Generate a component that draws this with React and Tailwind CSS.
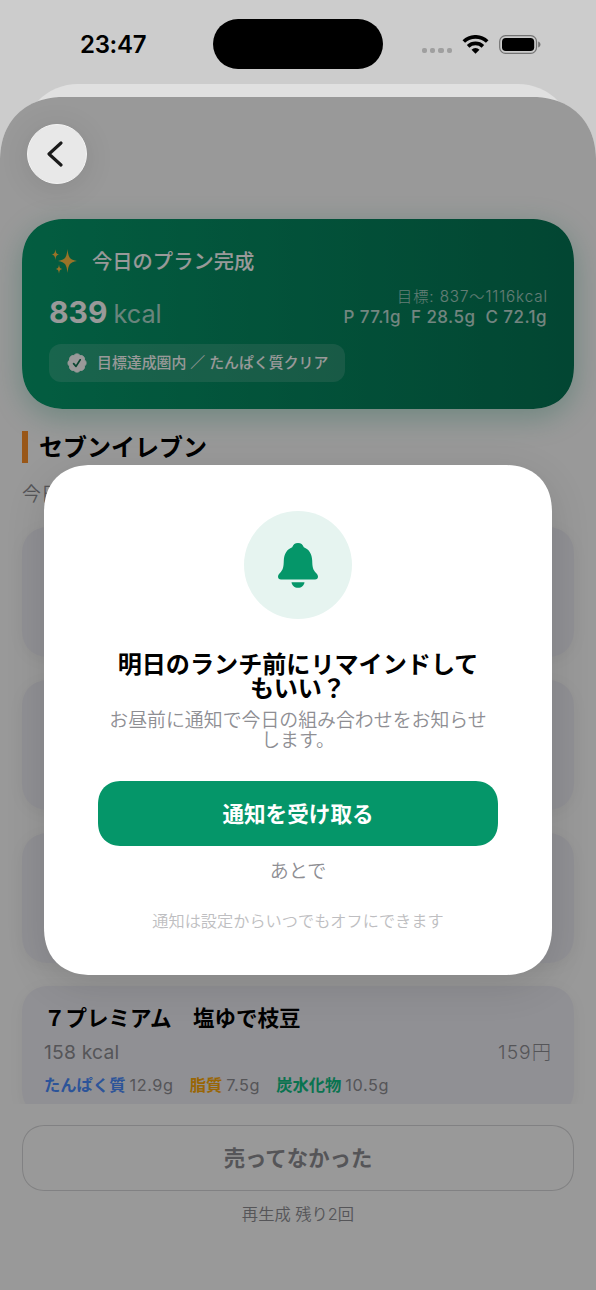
import React from 'react'
import { BadgeCheck } from 'lucide-react'

const StatusBar = () => (
  <div className="flex h-[84px] items-start text-black">
    <div className="mt-[31px] w-[213px] pl-[80px] text-[24px] font-semibold leading-[28px] tracking-[-0.3px]">23:47</div>
    <div className="mt-[19px] h-[50px] w-[170px] rounded-full bg-black" />
    <div className="mt-[34px] ml-[39px] flex h-5 items-center">
      <div className="mt-[13px] flex gap-[3px]">
        <span className="h-[5px] w-[5.200px] rounded-[2px] bg-[#9f9f9f]" />
        <span className="h-[5px] w-[5.200px] rounded-[2px] bg-[#9f9f9f]" />
        <span className="h-[5px] w-[5.200px] rounded-[2px] bg-[#9f9f9f]" />
        <span className="h-[5px] w-[5.200px] rounded-[2px] bg-[#9f9f9f]" />
      </div>
      <svg className="ml-[10px] h-[19px] w-[27px]" viewBox="0 0 27 19" fill="none" stroke="#000" strokeWidth="3.700">
        <path d="M1.8 6.500a17 17 0 0 1 23.4 0" />
        <path d="M6.1 11.300a10.8 10.8 0 0 1 14.8 0" />
        <path d="M13.5 18.8l-4-4.1a5.8 5.8 0 0 1 8 0z" fill="#000" stroke="none" />
      </svg>
      <svg className="ml-[10px] h-[19px] w-[42px]" viewBox="0 0 42 19">
        <rect x="0.7" y="0.7" width="36.8" height="17.6" rx="5.8" fill="none" stroke="#737373" strokeWidth="1.2" />
        <rect x="3" y="3" width="32.2" height="13" rx="3.8" />
        <path d="M39.2 6.6c3 .8 3 5 0 5.8z" fill="#737373" />
      </svg>
    </div>
  </div>
)

const Sparkles = () => (
  <svg className="h-[27px] w-[27px]" viewBox="0 0 27 27" fill="#ffc043">
    <path d="M16.5 1c.9 8.300 2 10.700 9.500 12-7.500 1.300-8.600 3.700-9.500 12-.9-8.300-2-10.700-9.500-12 7.500-1.300 8.600-3.700 9.500-12z" />
    <path d="M4.400 1.200c.5 3.700 1 4.800 4.100 5.400-3.100.6-3.600 1.700-4.100 5.400-.5-3.700-1-4.800-4.100-5.400 3.100-.6 3.600-1.700 4.100-5.400z" />
    <path d="M8 16.500c.4 3 .9 4.100 3.300 4.600-2.400.5-2.900 1.600-3.300 4.600-.4-3-.9-4.100-3.300-4.600 2.400-.5 2.900-1.600 3.300-4.600z" />
  </svg>
)

// White seal with the tick in the card's green
const Seal = () => (
  <span className="relative block size-[22px]">
    <BadgeCheck className="size-[22px] fill-white text-white" strokeWidth={1} />
    <svg className="absolute inset-0 size-[22px]" viewBox="0 0 24 24" fill="none" stroke="#137553" strokeWidth="1.900" strokeLinecap="round" strokeLinejoin="round">
      <path d="M8.300 12.700l2.600 3 4.600-7.200" />
    </svg>
  </span>
)

const PlanCard = () => (
  <div className="mx-[22px] h-[190px] rounded-[44px] bg-linear-to-r from-[#059b6c] to-[#047554] px-[27px] pt-[26px] text-white shadow-[0_8px_30px_rgba(5,150,105,0.3)] [corner-shape:superellipse(1.2)]">
    <div className="flex h-8 items-center">
      <div className="ml-[2px]"><Sparkles /></div>
      <p className="mt-[1px] ml-[14px] text-[20.300px] font-medium leading-8">今日のプラン完成</p>
    </div>
    <div className="mt-[9px] flex h-11 items-center justify-between">
      <div className="flex items-baseline pt-[10px]">
        <span className="text-[30px] font-bold leading-9">839</span>
        <span className="ml-[6px] text-[25.300px] leading-9 text-white/70">kcal</span>
      </div>
      <div className="text-right text-white/75">
        <p className="-mt-[2px] -mr-[0.9px] text-[15.200px] font-light leading-[20px] tracking-[0.9px] text-white/65">目標: 837〜1116kcal</p>
        <p className="text-[17px] font-medium leading-[21px] tracking-[0.45px] whitespace-pre">P 77.1g  F 28.5g  C 72.1g</p>
      </div>
    </div>
    <div className="mt-[14px] flex h-[38px] w-[296px] items-center rounded-[12px] bg-white/15 pl-[17px]">
      <Seal />
      <span className="mt-[1px] ml-[9px] text-[14.900px] font-medium whitespace-nowrap">目標達成圏内 ／ たんぱく質クリア</span>
    </div>
  </div>
)

const ItemCard = ({ children }) => (
  <div className="h-[130px] shrink-0 rounded-[28px] bg-[#f1f0f7] px-[22px] pt-[16px] shadow-[0_3px_16px_rgba(0,0,0,0.05)] [corner-shape:superellipse(1.2)]">
    {children}
  </div>
)

const Bell = () => (
  <svg className="h-[45px] w-[40px]" viewBox="0 0 40 45" fill="#059669">
    <path d="M20 0c3 0 4.800 1.500 5.800 4.200C31 6.200 34 11 34.200 17.500c.2 6.500.6 9 3.600 12.200 1.500 1.600 2.200 2.700 2.200 4.100 0 1.600-1.100 2.600-3 2.600H3c-1.900 0-3-1-3-2.600 0-1.400.7-2.500 2.200-4.100 3-3.200 3.400-5.700 3.600-12.200C6 11 9 6.200 14.200 4.200 15.200 1.500 17 0 20 0z" />
    <path d="M13.500 39.200h13c-.5 3.200-3 5.600-6.500 5.600s-6-2.400-6.500-5.600z" />
  </svg>
)

const ReminderModal = () => (
  <div className="flex h-[510px] w-[508px] flex-col items-center rounded-[48px] bg-white pt-[46px] text-center shadow-[0_10px_40px_rgba(0,0,0,0.12)] [corner-shape:superellipse(1.2)]">
    <div className="flex size-[108px] items-center justify-center rounded-full bg-[#e6f4f0]">
      <Bell />
    </div>
    <h2 className="mt-[34px] text-[24.100px] font-bold leading-6 text-black">
      明日のランチ前にリマインドして<br />もいい？
    </h2>
    <p className="mt-[10px] text-[18.900px] font-[350] leading-[19.500px] text-[#8e8e93]">
      お昼前に通知で今日の組み合わせをお知らせ<br />します。
    </p>
    <button className="mt-[31px] h-[65px] w-[400px] rounded-[24px] bg-[#059669] pt-px text-[21.600px] font-bold text-white [corner-shape:superellipse(1.2)]">
      通知を受け取る
    </button>
    <button className="mt-[12px] text-[19px] font-[350] leading-7 text-[#8e8e93]">あとで</button>
    <p className="mt-[23px] text-[16.200px] font-[350] leading-6 text-[#bebec1]">通知は設定からいつでもオフにできます</p>
  </div>
)

export default function App() {
  return (
    <div className={'h-[1290px] w-[596px] overflow-hidden bg-[#cccccc] font-["Inter","Noto_Sans_CJK_JP",sans-serif]'}>
      <StatusBar />
      {/* Card stacked behind the sheet */}
      <div className="-mb-[67px] mx-[22px] h-[80px] rounded-t-[56px] bg-[#e0e0e0]" />

      <div className="relative h-[1193px] overflow-hidden rounded-t-[64px] bg-white [corner-shape:superellipse(1.15)]">
        <div className="flex h-full flex-col pt-[122px]">
          <PlanCard />
          <div className="mx-[22px] mt-[22px] flex h-8 items-center">
            <span className="h-8 w-[6px] bg-[#ff9228]" />
            <h1 className="mt-[2px] ml-[11px] text-[24px] font-bold text-black">セブンイレブン</h1>
          </div>
          <p className="mx-[22px] mt-[19px] mb-[-1px] text-[18.900px] font-[350] leading-[26px] text-[#8e8e93]">今日のおすすめの組み合わせ</p>

          <div className="flex h-[597px] flex-col gap-[23px] overflow-hidden px-[22px] pt-[20px]">
            <ItemCard />
            <ItemCard />
            <ItemCard />
            <ItemCard>
              <h3 className="text-[21.500px] font-bold leading-8 text-black">７プレミアム　塩ゆで枝豆</h3>
              <div className="mt-[4px] flex justify-between text-[19.300px] leading-7 text-[#8e8e93]">
                <span className="tracking-[0.2px]">158 kcal</span>
                <span className="font-light tracking-[1px]">159円</span>
              </div>
              <div className="mt-[7px] flex gap-[16px] text-[16.300px] leading-6 tracking-[0.600px] text-[#8e8e93]">
                <span><b className="mr-[4px] tracking-normal text-[#4a8cff]">たんぱく質</b>12.9g</span>
                <span><b className="mr-[4px] tracking-normal text-[#ffaa08]">脂質</b>7.5g</span>
                <span><b className="mr-[4px] tracking-normal text-[#10c085]">炭水化物</b>10.5g</span>
              </div>
            </ItemCard>
          </div>

          <div className="flex-1 bg-white px-[22px] pt-[21px] text-center text-[#8e8e93]">
            <button className="h-[66px] w-full rounded-[24px] border-[1.500px] border-[#d8d8da] text-[21.400px] font-bold [corner-shape:superellipse(1.2)]">
              売ってなかった
            </button>
            <p className="mt-[11px] text-[16.300px] font-[350] leading-6">再生成 残り2回</p>
          </div>
        </div>

        {/* Dimmed backdrop with the dialog */}
        <div className="absolute inset-0 flex justify-center bg-black/40 pt-[368px]">
          <ReminderModal />
        </div>
        <button className="absolute top-[27px] left-[27px] flex size-[60px] items-center justify-center rounded-full border border-[#f3f3f3] bg-[#e8e8e8] shadow-[0_4px_30px_rgba(0,0,0,0.1)]">
          <svg className="mr-[4px] h-[26px] w-[16px]" viewBox="0 0 16 26" fill="none" stroke="#1a1a1a" strokeWidth="3.100" strokeLinecap="round" strokeLinejoin="round">
            <path d="M14 2L2 13l12 11" />
          </svg>
        </button>
      </div>
    </div>
  )
}
